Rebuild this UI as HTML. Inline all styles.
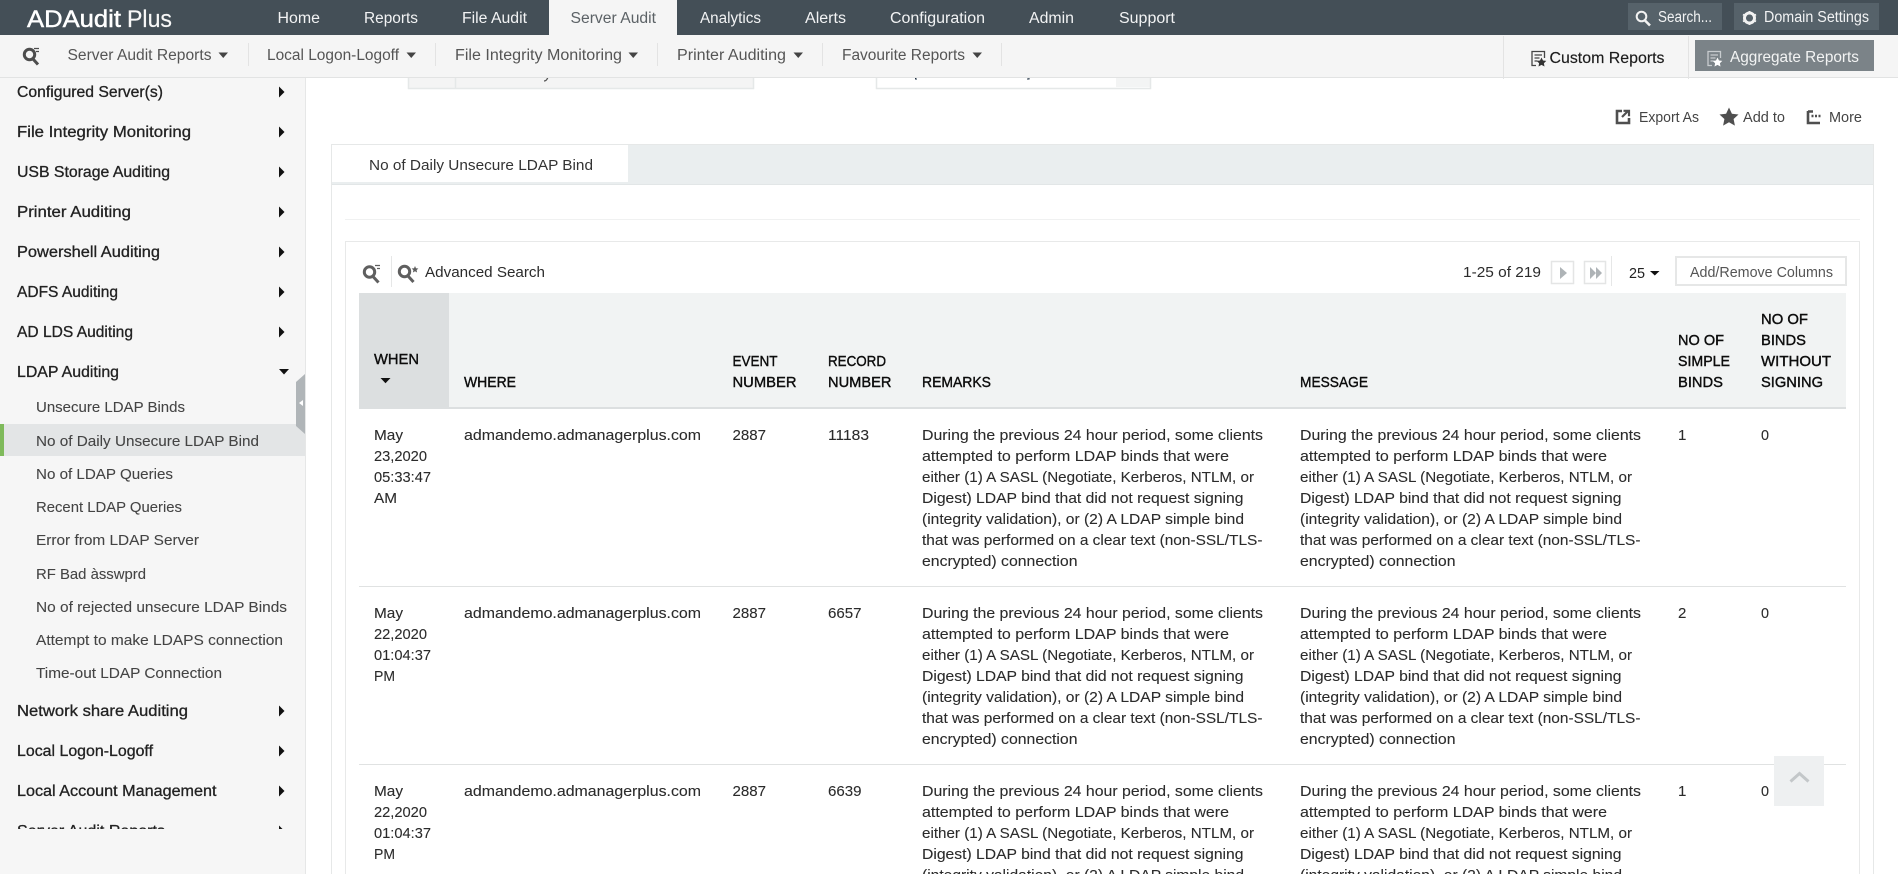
<!DOCTYPE html>
<html lang="en"><head><meta charset="utf-8"><title>ADAudit Plus - Server Audit</title>
<style>
html,body{margin:0;padding:0;background:#fff;width:1898px;height:874px;overflow:hidden}
svg{display:block}
text{font-family:"Liberation Sans",Arial,sans-serif;font-size:15px;fill:#333;white-space:pre}
.n{fill:#f2f3f4;font-size:15.5px}
.sub{fill:#555;font-size:15.5px}
.sb{fill:#222;font-size:15.5px;stroke:#222;stroke-width:.3}
.si{fill:#444;font-size:15px;stroke:#444;stroke-width:.08}
.h{fill:#0c0c0c;font-size:15px;stroke:#0c0c0c;stroke-width:.4}
.b{fill:#2b2b2b;stroke:#2b2b2b;stroke-width:.1}
.a{fill:#444}
</style></head><body>
<svg xmlns="http://www.w3.org/2000/svg" width="1898" height="874" viewBox="0 0 1898 874">
<rect width="1898" height="874" fill="#fff"/>

<!-- clipped content beneath the header -->
<rect x="408" y="76" width="346" height="12" fill="#f4f4f4"/>
<path d="M408.500 76V88.500H753.500V76M455.500 76V88" fill="none" stroke="#e5e8e8" stroke-width="1.500"/>
<path d="M544 81c2 0 3-1 4-4" fill="none" stroke="#555" stroke-width="1.300"/>
<rect x="876" y="76" width="275" height="12" fill="#fff"/>
<rect x="1116" y="76" width="34" height="11" fill="#f3f4f4"/>
<path d="M876.500 76V88.500H1150.500V76" fill="none" stroke="#e5e8e8" stroke-width="1.500"/>
<path d="M915.500 77V79H917M1029 77V79H1027" fill="none" stroke="#234" stroke-width="1"/>

<!-- top bar -->
<rect width="1898" height="35" fill="#444f57"/>
<text x="27" y="27" style="font-size:24px;fill:#fff;stroke:#fff;stroke-width:.45" textLength="94" lengthAdjust="spacingAndGlyphs">ADAudit</text>
<text x="127" y="27" style="font-size:24px;fill:#f8f8f8;stroke:#f8f8f8;stroke-width:.15" textLength="45" lengthAdjust="spacingAndGlyphs">Plus</text>
<rect x="549" y="0" width="128" height="35" fill="#f5f5f5"/>
<text class="n" x="277.500" y="23" textLength="42.500" lengthAdjust="spacingAndGlyphs">Home</text>
<text class="n" x="364" y="23" textLength="54" lengthAdjust="spacingAndGlyphs">Reports</text>
<text class="n" x="462" y="23" textLength="65" lengthAdjust="spacingAndGlyphs">File Audit</text>
<text class="n" x="570.500" y="23" style="fill:#5c6266" textLength="85.500" lengthAdjust="spacingAndGlyphs">Server Audit</text>
<text class="n" x="700" y="23" textLength="61" lengthAdjust="spacingAndGlyphs">Analytics</text>
<text class="n" x="805" y="23" textLength="41" lengthAdjust="spacingAndGlyphs">Alerts</text>
<text class="n" x="890" y="23" textLength="95" lengthAdjust="spacingAndGlyphs">Configuration</text>
<text class="n" x="1029" y="23" textLength="45" lengthAdjust="spacingAndGlyphs">Admin</text>
<text class="n" x="1119" y="23" textLength="56" lengthAdjust="spacingAndGlyphs">Support</text>

<rect x="1628" y="3" width="94" height="27" fill="#56626a"/>
<circle cx="1641.500" cy="16.500" r="4.800" fill="none" stroke="#f2f2f2" stroke-width="2"/>
<path d="M1645 20.500L1650 25.500" stroke="#f2f2f2" stroke-width="2.600"/>
<text class="n" x="1658" y="22" textLength="54" lengthAdjust="spacingAndGlyphs">Search...</text>
<rect x="1734" y="3" width="145" height="27" fill="#56626a"/>
<circle cx="1749.500" cy="18" r="5" fill="none" stroke="#f2f2f2" stroke-width="3"/>
<path d="M1749.500 11v14M1743 14.500l13 7M1743 21.500l13-7" stroke="#f2f2f2" stroke-width="1.800"/>
<circle cx="1749.500" cy="18" r="3.500" fill="#56626a"/>
<text class="n" x="1764" y="22" textLength="105" lengthAdjust="spacingAndGlyphs">Domain Settings</text>

<!-- sub bar -->
<rect y="35" width="1898" height="42" fill="#f5f5f5"/>
<rect y="77" width="1898" height="1" fill="#e2e3e3"/>
<g fill="none" stroke="#4d4d4d">
<circle cx="29.500" cy="54.500" r="5.200" stroke-width="3"/><path d="M33 59l5 5.500" stroke-width="3"/><path d="M34 48.500h5M36 51.500h3" stroke-width="1.300"/>
</g>
<text class="sub" x="67.500" y="60" textLength="144" lengthAdjust="spacingAndGlyphs">Server Audit Reports</text>
<path d="M218.500 52.500h9.500l-4.750 5.500z" fill="#444"/>
<rect x="248" y="43" width="1" height="23" fill="#e3e3e3"/>
<text class="sub" x="267" y="60" textLength="132" lengthAdjust="spacingAndGlyphs">Local Logon-Logoff</text>
<path d="M406.500 52.500h9.500l-4.750 5.500z" fill="#444"/>
<rect x="435" y="43" width="1" height="23" fill="#e3e3e3"/>
<text class="sub" x="455" y="60" textLength="167" lengthAdjust="spacingAndGlyphs">File Integrity Monitoring</text>
<path d="M628.500 52.500h9.500l-4.750 5.500z" fill="#444"/>
<rect x="657" y="43" width="1" height="23" fill="#e3e3e3"/>
<text class="sub" x="677" y="60" textLength="109" lengthAdjust="spacingAndGlyphs">Printer Auditing</text>
<path d="M793.500 52.500h9.500l-4.750 5.500z" fill="#444"/>
<rect x="822" y="43" width="1" height="23" fill="#e3e3e3"/>
<text class="sub" x="842" y="60" textLength="123" lengthAdjust="spacingAndGlyphs">Favourite Reports</text>
<path d="M972.500 52.500h9.500l-4.750 5.500z" fill="#444"/>
<rect x="1001" y="43" width="1" height="23" fill="#e3e3e3"/>

<rect x="1503" y="36" width="1" height="43" fill="#e3e3e3"/>
<rect x="1688" y="36" width="1" height="43" fill="#e3e3e3"/>
<path d="M1536 65.500H1532V51.500H1544.500V58" fill="none" stroke="#444" stroke-width="1.300"/>
<path d="M1534.500 55h7.500M1534.500 58h5M1534.500 61h3" stroke="#444" stroke-width="1.200"/>
<path d="M1541.500 57.500l1.500 3 3.300.4-2.400 2.300.6 3.300-3-1.600-3 1.600.6-3.300-2.400-2.300 3.300-.4z" fill="#333"/>
<text x="1549.500" y="63" style="font-size:16px;fill:#1c1c1c;stroke:#1c1c1c;stroke-width:.15" textLength="115" lengthAdjust="spacingAndGlyphs">Custom Reports</text>
<rect x="1695" y="40" width="179" height="31" fill="#7b8388"/>
<path d="M1712 65.500H1708V51.500H1720.500V58" fill="none" stroke="#c8cccf" stroke-width="1.300"/>
<path d="M1710.500 55h7.500M1710.500 58h5M1710.500 61h3" stroke="#c8cccf" stroke-width="1.200"/>
<path d="M1717.500 57.500l1.500 3 3.300.4-2.400 2.300.6 3.300-3-1.600-3 1.600.6-3.300-2.400-2.300 3.300-.4z" fill="#fff"/>
<text x="1730" y="62" style="font-size:16px;fill:#f3f4f4" textLength="129" lengthAdjust="spacingAndGlyphs">Aggregate Reports</text>

<!-- sidebar -->
<rect y="78" width="305" height="796" fill="#f6f6f6"/>
<rect x="305" y="78" width="1" height="796" fill="#e6e7e7"/>
<rect x="4" y="424" width="301" height="32" fill="#e3e5e6"/>
<rect x="0" y="424" width="4" height="32" fill="#7fba5b"/>
<path d="M305 374L296 382V426L305 434Z" fill="#b0b5b8"/>
<path d="M303 400l-4 3 4 3z" fill="#fff"/>
<clipPath id="sc"><rect x="0" y="78" width="305" height="751"/></clipPath>
<g clip-path="url(#sc)">
<text class="sb" x="17" y="97" textLength="146" lengthAdjust="spacingAndGlyphs">Configured Server(s)</text>
<text class="sb" x="17" y="137" textLength="174" lengthAdjust="spacingAndGlyphs">File Integrity Monitoring</text>
<text class="sb" x="17" y="177" textLength="153" lengthAdjust="spacingAndGlyphs">USB Storage Auditing</text>
<text class="sb" x="17" y="217" textLength="114" lengthAdjust="spacingAndGlyphs">Printer Auditing</text>
<text class="sb" x="17" y="257" textLength="143" lengthAdjust="spacingAndGlyphs">Powershell Auditing</text>
<text class="sb" x="17" y="297" textLength="101" lengthAdjust="spacingAndGlyphs">ADFS Auditing</text>
<text class="sb" x="17" y="337" textLength="116" lengthAdjust="spacingAndGlyphs">AD LDS Auditing</text>
<text class="sb" x="17" y="377" textLength="102" lengthAdjust="spacingAndGlyphs">LDAP Auditing</text>
<text class="si" x="36" y="412" textLength="149" lengthAdjust="spacingAndGlyphs">Unsecure LDAP Binds</text>
<text class="si" x="36" y="446" textLength="223" lengthAdjust="spacingAndGlyphs">No of Daily Unsecure LDAP Bind</text>
<text class="si" x="36" y="479" textLength="137" lengthAdjust="spacingAndGlyphs">No of LDAP Queries</text>
<text class="si" x="36" y="512" textLength="146" lengthAdjust="spacingAndGlyphs">Recent LDAP Queries</text>
<text class="si" x="36" y="545" textLength="163" lengthAdjust="spacingAndGlyphs">Error from LDAP Server</text>
<text class="si" x="36" y="579" textLength="110" lengthAdjust="spacingAndGlyphs">RF Bad àsswprd</text>
<text class="si" x="36" y="612" textLength="251" lengthAdjust="spacingAndGlyphs">No of rejected unsecure LDAP Binds</text>
<text class="si" x="36" y="645" textLength="247" lengthAdjust="spacingAndGlyphs">Attempt to make LDAPS connection</text>
<text class="si" x="36" y="678" textLength="186" lengthAdjust="spacingAndGlyphs">Time-out LDAP Connection</text>
<text class="sb" x="17" y="716" textLength="171" lengthAdjust="spacingAndGlyphs">Network share Auditing</text>
<text class="sb" x="17" y="756" textLength="136" lengthAdjust="spacingAndGlyphs">Local Logon-Logoff</text>
<text class="sb" x="17" y="796" textLength="199.500" lengthAdjust="spacingAndGlyphs">Local Account Management</text>
<text class="sb" x="17" y="836" textLength="148" lengthAdjust="spacingAndGlyphs">Server Audit Reports</text>
<g fill="#111">
<path d="M279 86.500l5.500 5.500-5.500 5.500z"/><path d="M279 126.500l5.500 5.500-5.500 5.500z"/><path d="M279 166.500l5.500 5.500-5.500 5.500z"/><path d="M279 206.500l5.500 5.500-5.500 5.500z"/><path d="M279 246.500l5.500 5.500-5.500 5.500z"/><path d="M279 286.500l5.500 5.500-5.500 5.500z"/><path d="M279 326.500l5.500 5.500-5.500 5.500z"/>
<path d="M279 369h10l-5 5.500z"/>
<path d="M279 705.500l5.500 5.500-5.500 5.500z"/><path d="M279 745.500l5.500 5.500-5.500 5.500z"/><path d="M279 785.500l5.500 5.500-5.500 5.500z"/><path d="M279 825.500l5.500 5.500-5.500 5.500z"/>
</g>
</g>

<!-- actions -->
<path d="M1622 111H1617V123H1629V118" fill="none" stroke="#4f4f4f" stroke-width="2.600"/>
<path d="M1622 117L1628 111M1623.500 110.800h5.500v5.500" fill="none" stroke="#4f4f4f" stroke-width="2.200"/>
<text class="a" x="1639" y="122" textLength="60" lengthAdjust="spacingAndGlyphs">Export As</text>
<path d="M1729 107.500l2.900 6.200 6.600.8-4.900 4.500 1.300 6.600-5.900-3.300-5.900 3.300 1.300-6.600-4.900-4.500 6.600-.8z" fill="#4f4f4f"/>
<text class="a" x="1743" y="122" textLength="42" lengthAdjust="spacingAndGlyphs">Add to</text>
<path d="M1808 111V123H1820M1808 111.500h5" fill="none" stroke="#4f4f4f" stroke-width="2.600"/>
<path d="M1811.500 116h2M1815 116h2M1818.500 116h2" stroke="#4f4f4f" stroke-width="2.600"/>
<text class="a" x="1829" y="122" textLength="33" lengthAdjust="spacingAndGlyphs">More</text>

<!-- tab panel -->
<rect x="331.500" y="144.500" width="1542" height="740" fill="#fff" stroke="#e6e8e8"/>
<rect x="332" y="145" width="1541" height="40" fill="#eaeeef"/>
<rect x="332" y="145" width="296" height="37" fill="#fff"/>
<rect x="332" y="184" width="1541" height="1" fill="#e2e6e7"/>
<text x="369" y="170" fill="#333" textLength="224" lengthAdjust="spacingAndGlyphs">No of Daily Unsecure LDAP Bind</text>
<rect x="345" y="219" width="1515" height="1" fill="#f0f1f1"/>

<!-- inner box -->
<rect x="345.500" y="241.500" width="1514" height="650" fill="#fff" stroke="#e8e9e9"/>
<g fill="none" stroke="#5f5f5f">
<circle cx="369.500" cy="272" r="5.200" stroke-width="3"/><path d="M373 276.500l5.500 6" stroke-width="3"/><path d="M375 265.500h5M377 268.500h3" stroke-width="1.300"/>
</g>
<rect x="391" y="256" width="1" height="31" fill="#e6e7e7"/>
<circle cx="404.500" cy="271.500" r="5.200" fill="none" stroke="#5f5f5f" stroke-width="3"/>
<path d="M408 276l5.500 6" stroke="#5f5f5f" stroke-width="3"/>
<path d="M415 266l1 2.200 2.400.3-1.800 1.600.5 2.400-2.100-1.200-2.100 1.200.5-2.400-1.800-1.600 2.400-.3z" fill="#5f5f5f"/>
<text x="425" y="277" style="fill:#2b2b2b" textLength="120" lengthAdjust="spacingAndGlyphs">Advanced Search</text>
<text x="1463" y="277" style="fill:#2b2b2b" textLength="78" lengthAdjust="spacingAndGlyphs">1-25 of 219</text>
<rect x="1551.500" y="261.500" width="22" height="22" fill="#fff" stroke="#e4e5e5" stroke-width="1.500"/>
<path d="M1560 267l7 6-7 6z" fill="#aeb3b6"/>
<rect x="1584.500" y="261.500" width="21" height="22" fill="#fff" stroke="#e4e5e5" stroke-width="1.500"/>
<path d="M1590 267l6 6-6 6zM1596 267l6 6-6 6z" fill="#aeb3b6"/>
<rect x="1611" y="256" width="1" height="30" fill="#e6e7e7"/>
<text x="1629" y="278" style="fill:#222" textLength="16" lengthAdjust="spacingAndGlyphs">25</text>
<path d="M1650 271h9.500l-4.700 4.500z" fill="#111"/>
<rect x="1676" y="257" width="170" height="28" fill="#fff" stroke="#e6e7e7" stroke-width="2"/>
<text x="1690" y="277" style="fill:#555" textLength="143" lengthAdjust="spacingAndGlyphs">Add/Remove Columns</text>

<!-- table head -->
<rect x="359" y="293" width="1487" height="114" fill="#f1f3f3"/>
<rect x="359" y="293" width="90" height="114" fill="#dcdfe0"/>
<rect x="359" y="407" width="1487" height="2" fill="#dcdfe0"/>
<text class="h" x="374" y="364" textLength="45" lengthAdjust="spacingAndGlyphs">WHEN</text>
<path d="M380.500 378h10l-5 5.200z" fill="#111"/>
<text class="h" x="464" y="387" textLength="52" lengthAdjust="spacingAndGlyphs">WHERE</text>
<text class="h" x="732.500" y="366" textLength="45" lengthAdjust="spacingAndGlyphs">EVENT</text>
<text class="h" x="732.500" y="387" textLength="64" lengthAdjust="spacingAndGlyphs">NUMBER</text>
<text class="h" x="828" y="366" textLength="58" lengthAdjust="spacingAndGlyphs">RECORD</text>
<text class="h" x="828" y="387" textLength="63.500" lengthAdjust="spacingAndGlyphs">NUMBER</text>
<text class="h" x="922" y="387" textLength="69" lengthAdjust="spacingAndGlyphs">REMARKS</text>
<text class="h" x="1300" y="387" textLength="68" lengthAdjust="spacingAndGlyphs">MESSAGE</text>
<text class="h" x="1678" y="345" textLength="46" lengthAdjust="spacingAndGlyphs">NO OF</text>
<text class="h" x="1678" y="366" textLength="52" lengthAdjust="spacingAndGlyphs">SIMPLE</text>
<text class="h" x="1678" y="387" textLength="45" lengthAdjust="spacingAndGlyphs">BINDS</text>
<text class="h" x="1761" y="324" textLength="47" lengthAdjust="spacingAndGlyphs">NO OF</text>
<text class="h" x="1761" y="345" textLength="45" lengthAdjust="spacingAndGlyphs">BINDS</text>
<text class="h" x="1761" y="366" textLength="70" lengthAdjust="spacingAndGlyphs">WITHOUT</text>
<text class="h" x="1761" y="387" textLength="62" lengthAdjust="spacingAndGlyphs">SIGNING</text>

<rect x="359" y="586" width="1487" height="1" fill="#e0e2e2"/>
<rect x="359" y="764" width="1487" height="1" fill="#e0e2e2"/>

<!-- row 1 -->
<g class="r">
<text class="b" x="374" y="440" textLength="29" lengthAdjust="spacingAndGlyphs">May</text>
<text class="b" x="374" y="461" textLength="53" lengthAdjust="spacingAndGlyphs">23,2020</text>
<text class="b" x="374" y="482" textLength="57" lengthAdjust="spacingAndGlyphs">05:33:47</text>
<text class="b" x="374" y="503" textLength="23" lengthAdjust="spacingAndGlyphs">AM</text>
<text class="b" x="464" y="440" textLength="237" lengthAdjust="spacingAndGlyphs">admandemo.admanagerplus.com</text>
<text class="b" x="732.500" y="440" textLength="33.500" lengthAdjust="spacingAndGlyphs">2887</text>
<text class="b" x="828" y="440" textLength="41" lengthAdjust="spacingAndGlyphs">11183</text>
<text class="b" x="922" y="440" textLength="341" lengthAdjust="spacingAndGlyphs">During the previous 24 hour period, some clients</text>
<text class="b" x="922" y="461" textLength="307" lengthAdjust="spacingAndGlyphs">attempted to perform LDAP binds that were</text>
<text class="b" x="922" y="482" textLength="332" lengthAdjust="spacingAndGlyphs">either (1) A SASL (Negotiate, Kerberos, NTLM, or</text>
<text class="b" x="922" y="503" textLength="321.500" lengthAdjust="spacingAndGlyphs">Digest) LDAP bind that did not request signing</text>
<text class="b" x="922" y="524" textLength="322" lengthAdjust="spacingAndGlyphs">(integrity validation), or (2) A LDAP simple bind</text>
<text class="b" x="922" y="545" textLength="340.500" lengthAdjust="spacingAndGlyphs">that was performed on a clear text (non-SSL/TLS-</text>
<text class="b" x="922" y="566" textLength="155.500" lengthAdjust="spacingAndGlyphs">encrypted) connection</text>
<text class="b" x="1300" y="440" textLength="341" lengthAdjust="spacingAndGlyphs">During the previous 24 hour period, some clients</text>
<text class="b" x="1300" y="461" textLength="307" lengthAdjust="spacingAndGlyphs">attempted to perform LDAP binds that were</text>
<text class="b" x="1300" y="482" textLength="332" lengthAdjust="spacingAndGlyphs">either (1) A SASL (Negotiate, Kerberos, NTLM, or</text>
<text class="b" x="1300" y="503" textLength="321.500" lengthAdjust="spacingAndGlyphs">Digest) LDAP bind that did not request signing</text>
<text class="b" x="1300" y="524" textLength="322" lengthAdjust="spacingAndGlyphs">(integrity validation), or (2) A LDAP simple bind</text>
<text class="b" x="1300" y="545" textLength="340.500" lengthAdjust="spacingAndGlyphs">that was performed on a clear text (non-SSL/TLS-</text>
<text class="b" x="1300" y="566" textLength="155.500" lengthAdjust="spacingAndGlyphs">encrypted) connection</text>
<text class="b" x="1678" y="440">1</text>
<text class="b" x="1761" y="440" textLength="8" lengthAdjust="spacingAndGlyphs">0</text>
</g>

<!-- row 2 -->
<g class="r">
<text class="b" x="374" y="618" textLength="29" lengthAdjust="spacingAndGlyphs">May</text>
<text class="b" x="374" y="639" textLength="53" lengthAdjust="spacingAndGlyphs">22,2020</text>
<text class="b" x="374" y="660" textLength="57" lengthAdjust="spacingAndGlyphs">01:04:37</text>
<text class="b" x="374" y="681" textLength="21" lengthAdjust="spacingAndGlyphs">PM</text>
<text class="b" x="464" y="618" textLength="237" lengthAdjust="spacingAndGlyphs">admandemo.admanagerplus.com</text>
<text class="b" x="732.500" y="618" textLength="33.500" lengthAdjust="spacingAndGlyphs">2887</text>
<text class="b" x="828" y="618" textLength="33.500" lengthAdjust="spacingAndGlyphs">6657</text>
<text class="b" x="922" y="618" textLength="341" lengthAdjust="spacingAndGlyphs">During the previous 24 hour period, some clients</text>
<text class="b" x="922" y="639" textLength="307" lengthAdjust="spacingAndGlyphs">attempted to perform LDAP binds that were</text>
<text class="b" x="922" y="660" textLength="332" lengthAdjust="spacingAndGlyphs">either (1) A SASL (Negotiate, Kerberos, NTLM, or</text>
<text class="b" x="922" y="681" textLength="321.500" lengthAdjust="spacingAndGlyphs">Digest) LDAP bind that did not request signing</text>
<text class="b" x="922" y="702" textLength="322" lengthAdjust="spacingAndGlyphs">(integrity validation), or (2) A LDAP simple bind</text>
<text class="b" x="922" y="723" textLength="340.500" lengthAdjust="spacingAndGlyphs">that was performed on a clear text (non-SSL/TLS-</text>
<text class="b" x="922" y="744" textLength="155.500" lengthAdjust="spacingAndGlyphs">encrypted) connection</text>
<text class="b" x="1300" y="618" textLength="341" lengthAdjust="spacingAndGlyphs">During the previous 24 hour period, some clients</text>
<text class="b" x="1300" y="639" textLength="307" lengthAdjust="spacingAndGlyphs">attempted to perform LDAP binds that were</text>
<text class="b" x="1300" y="660" textLength="332" lengthAdjust="spacingAndGlyphs">either (1) A SASL (Negotiate, Kerberos, NTLM, or</text>
<text class="b" x="1300" y="681" textLength="321.500" lengthAdjust="spacingAndGlyphs">Digest) LDAP bind that did not request signing</text>
<text class="b" x="1300" y="702" textLength="322" lengthAdjust="spacingAndGlyphs">(integrity validation), or (2) A LDAP simple bind</text>
<text class="b" x="1300" y="723" textLength="340.500" lengthAdjust="spacingAndGlyphs">that was performed on a clear text (non-SSL/TLS-</text>
<text class="b" x="1300" y="744" textLength="155.500" lengthAdjust="spacingAndGlyphs">encrypted) connection</text>
<text class="b" x="1678" y="618">2</text>
<text class="b" x="1761" y="618" textLength="8" lengthAdjust="spacingAndGlyphs">0</text>
</g>

<!-- row 3 -->
<g class="r">
<text class="b" x="374" y="796" textLength="29" lengthAdjust="spacingAndGlyphs">May</text>
<text class="b" x="374" y="817" textLength="53" lengthAdjust="spacingAndGlyphs">22,2020</text>
<text class="b" x="374" y="838" textLength="57" lengthAdjust="spacingAndGlyphs">01:04:37</text>
<text class="b" x="374" y="859" textLength="21" lengthAdjust="spacingAndGlyphs">PM</text>
<text class="b" x="464" y="796" textLength="237" lengthAdjust="spacingAndGlyphs">admandemo.admanagerplus.com</text>
<text class="b" x="732.500" y="796" textLength="33.500" lengthAdjust="spacingAndGlyphs">2887</text>
<text class="b" x="828" y="796" textLength="33.500" lengthAdjust="spacingAndGlyphs">6639</text>
<text class="b" x="922" y="796" textLength="341" lengthAdjust="spacingAndGlyphs">During the previous 24 hour period, some clients</text>
<text class="b" x="922" y="817" textLength="307" lengthAdjust="spacingAndGlyphs">attempted to perform LDAP binds that were</text>
<text class="b" x="922" y="838" textLength="332" lengthAdjust="spacingAndGlyphs">either (1) A SASL (Negotiate, Kerberos, NTLM, or</text>
<text class="b" x="922" y="859" textLength="321.500" lengthAdjust="spacingAndGlyphs">Digest) LDAP bind that did not request signing</text>
<text class="b" x="922" y="880" textLength="322" lengthAdjust="spacingAndGlyphs">(integrity validation), or (2) A LDAP simple bind</text>
<text class="b" x="1300" y="796" textLength="341" lengthAdjust="spacingAndGlyphs">During the previous 24 hour period, some clients</text>
<text class="b" x="1300" y="817" textLength="307" lengthAdjust="spacingAndGlyphs">attempted to perform LDAP binds that were</text>
<text class="b" x="1300" y="838" textLength="332" lengthAdjust="spacingAndGlyphs">either (1) A SASL (Negotiate, Kerberos, NTLM, or</text>
<text class="b" x="1300" y="859" textLength="321.500" lengthAdjust="spacingAndGlyphs">Digest) LDAP bind that did not request signing</text>
<text class="b" x="1300" y="880" textLength="322" lengthAdjust="spacingAndGlyphs">(integrity validation), or (2) A LDAP simple bind</text>
<text class="b" x="1678" y="796">1</text>
<text class="b" x="1761" y="796" textLength="8" lengthAdjust="spacingAndGlyphs">0</text>
</g>

<!-- scroll to top -->
<rect x="1774" y="756" width="50" height="50" fill="#eef0f1"/>
<path d="M1790.500 781.500L1799.500 773.500L1808.500 781.500" fill="none" stroke="#c3c7c9" stroke-width="3"/>
</svg>
</body></html>
